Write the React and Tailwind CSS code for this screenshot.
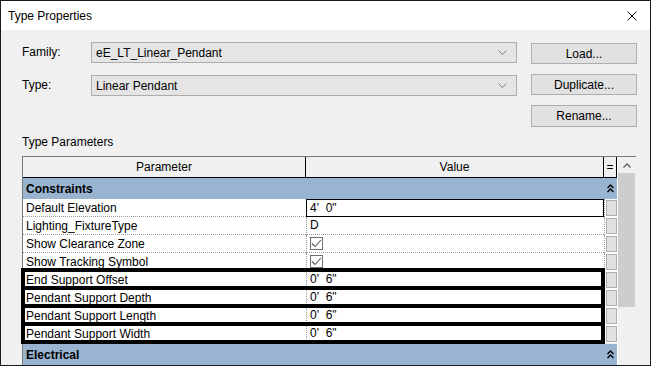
import React from "react";

const font = { fontFamily: '"Liberation Sans", Arial, sans-serif' };

const rows = [
  { name: "Default Elevation", value: "4'  0\"", editing: true },
  { name: "Lighting_FixtureType", value: "D" },
  { name: "Show Clearance Zone", check: true },
  { name: "Show Tracking Symbol", check: true },
  { name: "End Support Offset", value: "0'  6\"", marked: true },
  { name: "Pendant Support Depth", value: "0'  6\"", marked: true },
  { name: "Pendant Support Length", value: "0'  6\"", marked: true },
  { name: "Pendant Support Width", value: "0'  6\"", marked: true },
];

const Chevron = () => (
  <svg width="9" height="6" viewBox="0 0 9 6" className="shrink-0">
    <polyline points="0.5,0.5 4.5,4.5 8.5,0.5" fill="none" stroke="#808080" strokeWidth="1" />
  </svg>
);

const Collapse = () => (
  <svg width="7" height="9" viewBox="0 0 7 9">
    <polyline points="0.5,4 3.5,1 6.5,4" fill="none" stroke="#000" strokeWidth="1.4" />
    <polyline points="0.5,8 3.5,5 6.5,8" fill="none" stroke="#000" strokeWidth="1.4" />
  </svg>
);

const Combo = ({ text }) => (
  <div className="w-[426px] h-[21px] flex items-center justify-between pl-[4px] pr-[9px] bg-[#e5e5e5] border border-[#acacac]">
    <span>{text}</span>
    <Chevron />
  </div>
);

const Button = ({ children, className = "" }) => (
  <div className={`w-[106px] flex items-center justify-center bg-[#e1e1e1] border border-[#adadad] ${className}`}>
    {children}
  </div>
);

const Band = ({ title }) => (
  <div className="h-[21px] flex items-center bg-[#99b4d1]">
    <span className="w-[581px] pl-[3px] font-bold">{title}</span>
    <span className="w-[12px] flex justify-center">
      <Collapse />
    </span>
  </div>
);

const Row = ({ row }) => (
  <div className={`h-[18px] flex bg-white ${row.marked ? "relative" : ""}`}>
    <div className="w-[283px] pl-[3px] leading-[18px] border-b border-dotted border-[#9a9a9a]">
      {row.name}
    </div>
    <div
      className={`w-[298px] pl-[3px] leading-[17px] whitespace-pre border-dotted border-[#9a9a9a] ${
        row.editing ? "border border-solid border-black leading-[16px]" : "border-l border-b"
      }`}
    >
      {row.check ? (
        <div className="mt-[2px] w-[13px] h-[13px] border border-[#6f6f6f] bg-white flex items-center justify-center">
          <svg width="11" height="9" viewBox="0 0 11 9">
            <polyline points="1,4.5 4,7.5 10,1" fill="none" stroke="#5a5a5a" strokeWidth="1.1" />
          </svg>
        </div>
      ) : (
        row.value
      )}
    </div>
    <div className="w-[13px] border-l border-dotted border-[#9a9a9a] pl-[1px] pt-[1px]">
      <div className="w-[11px] h-[16px] bg-[#e1e1e1] border border-[#adadad]" />
    </div>
    {row.marked && (
      <div className="absolute -top-[3px] -bottom-[1px] -left-[2px] right-[12px] border-4 border-black pointer-events-none" />
    )}
  </div>
);

export default function App() {
  return (
    <div
      className="w-[651px] h-[366px] border border-[#1a1a1a] bg-[#f0f0f0] overflow-hidden text-[12px] text-black flex flex-col"
      style={font}
    >
      <div className="h-[29px] shrink-0 bg-white flex items-center justify-between pl-[7px] pr-[13px]">
        <span>Type Properties</span>
        <svg width="10" height="10" viewBox="0 0 10 10">
          <path d="M0.5 0.5 L9.5 9.5 M9.5 0.5 L0.5 9.5" stroke="#000" strokeWidth="1" />
        </svg>
      </div>

      <div className="flex-1 pl-[21px] pt-[12px] flex flex-col min-h-0">
        <div className="h-[22px] flex">
          <span className="w-[69px] leading-[21px]">Family:</span>
          <Combo text="eE_LT_Linear_Pendant" />
          <Button className="ml-[14px] mt-[1px] h-[21px]">Load...</Button>
        </div>
        <div className="h-[22px] flex mt-[10px]">
          <span className="w-[69px] leading-[21px] mt-[1px]">Type:</span>
          <div className="mt-[1px]">
            <Combo text="Linear Pendant" />
          </div>
          <Button className="ml-[14px] h-[21px]">Duplicate...</Button>
        </div>
        <div className="h-[22px] flex mt-[9px]">
          <Button className="ml-[509px] h-[22px]">Rename...</Button>
        </div>

        <div className="mt-[8px] h-[15px] leading-[15px]">Type Parameters</div>

        <div className="mt-[6px] w-[614px] flex-1 flex border-t border-l border-[#7a7a7a] min-h-0">
          <div className="w-[594px] flex flex-col">
            <div className="h-[21px] flex border-b border-black shrink-0">
              <div className="w-[283px] border-r border-black text-center leading-[20px]">Parameter</div>
              <div className="w-[298px] border-r border-black text-center leading-[20px]">Value</div>
              <div className="w-[13px] border-r border-black text-center leading-[20px]">=</div>
            </div>
            <Band title="Constraints" />
            {rows.map((r) => (
              <Row key={r.name} row={r} />
            ))}
            <div className="h-[1px]" />
            <Band title="Electrical" />
          </div>
          <div className="w-[19px] border-l border-white flex flex-col">
            <div className="h-[16px] flex items-center justify-center">
              <svg width="8" height="5" viewBox="0 0 8 5">
                <polyline points="0.5,4.5 4,1 7.5,4.5" fill="none" stroke="#606060" strokeWidth="1.3" />
              </svg>
            </div>
            <div className="h-[134px] bg-[#cdcdcd] mr-[1px]" />
          </div>
        </div>
      </div>
    </div>
  );
}
